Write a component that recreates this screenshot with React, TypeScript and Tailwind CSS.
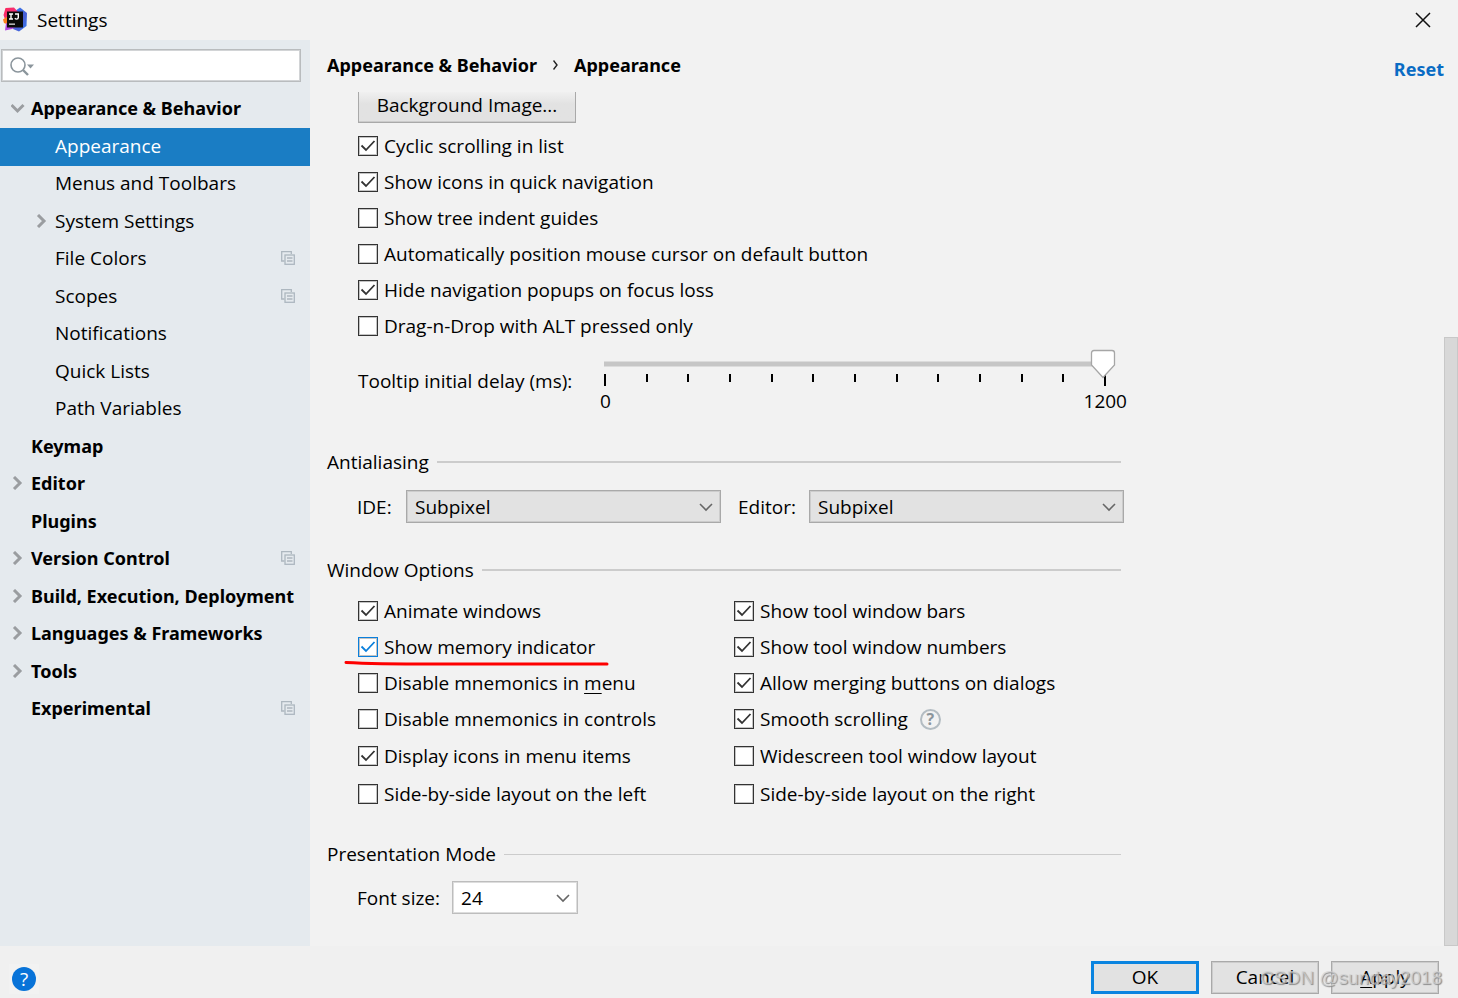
import { useState, type ReactNode } from "react";
import clsx from "clsx";

type TreeItem = {
  label: string;
  level: 0 | 1;
  arrow?: "open" | "closed";
  project?: boolean;
};

const tree: TreeItem[] = [
  { label: "Appearance & Behavior", level: 0, arrow: "open" },
  { label: "Appearance", level: 1 },
  { label: "Menus and Toolbars", level: 1 },
  { label: "System Settings", level: 1, arrow: "closed" },
  { label: "File Colors", level: 1, project: true },
  { label: "Scopes", level: 1, project: true },
  { label: "Notifications", level: 1 },
  { label: "Quick Lists", level: 1 },
  { label: "Path Variables", level: 1 },
  { label: "Keymap", level: 0 },
  { label: "Editor", level: 0, arrow: "closed" },
  { label: "Plugins", level: 0 },
  { label: "Version Control", level: 0, arrow: "closed", project: true },
  { label: "Build, Execution, Deployment", level: 0, arrow: "closed" },
  { label: "Languages & Frameworks", level: 0, arrow: "closed" },
  { label: "Tools", level: 0, arrow: "closed" },
  { label: "Experimental", level: 0, project: true },
];

// Bold text is set in Noto Sans, the rest of the dialog in Open Sans
const boldText = "font-['Noto_Sans',sans-serif] text-[18px] font-bold";

function Logo() {
  return (
    <svg width="26" height="26" viewBox="0 0 26 26" aria-hidden="true">
      <defs>
        <linearGradient id="logo-blue" x1="0" y1="0" x2="1" y2="1">
          <stop offset="0" stopColor="#2f7df0" />
          <stop offset="0.6" stopColor="#4a5fd6" />
          <stop offset="1" stopColor="#2f7df0" />
        </linearGradient>
        <linearGradient id="logo-red" x1="0" y1="0" x2="1" y2="1">
          <stop offset="0" stopColor="#fe2857" />
          <stop offset="1" stopColor="#e8359b" />
        </linearGradient>
      </defs>
      <path d="M12 4 L17 .5 L24 6 L23.500 19 L16 24.500 L10 22 Z" fill="url(#logo-blue)" />
      <path d="M2.500 1 L11 .5 L16 6 L14 14 L3 15 L.5 8 Z" fill="url(#logo-red)" />
      <path d="M0 12.500 L5 9 L6 18 L1 16 Z" fill="#fc801d" />
      <path d="M3 16 L13 20 L9 22 L2 23.500 Z" fill="#b34ae0" />
      <rect x="4" y="4.500" width="16" height="16" fill="#0b0b0b" />
      <path d="M6 7 h4 M8 7 v5 M6 12 h4 M12 7 h3.300 v3.600 q0 1.500 -1.600 1.500 q-1.200 0 -1.900 -.8" fill="none" stroke="#fff" strokeWidth="1.400" />
      <rect x="6" y="16.500" width="6" height="1.300" fill="#ddd" />
    </svg>
  );
}

function Arrow({ open }: { open: boolean }) {
  return (
    <svg width="14" height="14" viewBox="0 0 14 14" fill="none" stroke="#9a9da0" strokeWidth="3" aria-hidden="true">
      {open ? <path d="M.5 4 L6.500 10 L12.500 4" /> : <path d="M3 1 L9 7 L3 13" />}
    </svg>
  );
}

function ProjectIcon() {
  return (
    <svg width="14" height="14" viewBox="0 0 14 14" fill="none" stroke="#adb7bf" strokeWidth="1.300" aria-hidden="true">
      <path d="M3.500 10 H.7 V.7 H10.300 V3" />
      <rect x="4" y="4" width="9.300" height="9.300" />
      <path d="M6 7 H11.500 M6 10 H11.500" />
    </svg>
  );
}

function Check({ label, defaultChecked = false, focused = false }: { label: ReactNode; defaultChecked?: boolean; focused?: boolean }) {
  return (
    <label className="flex items-center gap-1.5">
      <span className={clsx("grid size-5", focused ? "text-[#0a7fdc]" : "text-[#333333]")}>
        <input
          type="checkbox"
          defaultChecked={defaultChecked}
          className="peer col-start-1 row-start-1 size-5 appearance-none border border-current bg-white shadow-[inset_0_0_0_1px_#c4c4c4]"
        />
        <svg viewBox="0 0 20 20" className="pointer-events-none invisible col-start-1 row-start-1 size-5 peer-checked:visible" fill="none" stroke="currentColor" strokeWidth="1.800" aria-hidden="true">
          <path d="M3.500 9.500 L8 14 L16.500 5" />
        </svg>
      </span>
      <span>{label}</span>
    </label>
  );
}

function Dropdown({ id, options, editable = false, className }: { id: string; options: string[]; editable?: boolean; className: string }) {
  return (
    <div className={clsx("grid items-center", className)}>
      <select
        id={id}
        className={clsx(
          "col-start-1 row-start-1 h-[33px] w-full appearance-none border pr-8 pl-2",
          editable
            ? "border-[#bdbdbd] bg-white shadow-[inset_0_0_0_1px_#dddddd]"
            : "border-[#a9a9a9] bg-[#e2e2e2] shadow-[inset_0_0_0_1px_#cccccc]",
        )}
      >
        {options.map((o) => (
          <option key={o}>{o}</option>
        ))}
      </select>
      <svg viewBox="0 0 14 14" className="pointer-events-none col-start-1 row-start-1 mr-2 size-3.5 justify-self-end" fill="none" stroke="#666666" strokeWidth="1.600" aria-hidden="true">
        <path d="M1 4 L7 10 L13 4" />
      </svg>
    </div>
  );
}

function SectionTitle({ children, thin = false }: { children: ReactNode; thin?: boolean }) {
  return (
    <div className="flex h-6 items-center gap-2">
      <h2>{children}</h2>
      <div className={clsx("flex-1 bg-[#cccccc]", thin ? "h-px" : "h-0.5")} />
    </div>
  );
}

function DelaySlider() {
  const [delay, setDelay] = useState(1200);
  return (
    <div className="w-[502px]">
      <div className="grid h-[25px] items-center">
        <div className="col-start-1 row-start-1 h-1.5 border-y border-[#dcdcdc] bg-[#c6c6c6]" />
        <input
          id="tooltip-delay"
          type="range"
          min={0}
          max={1200}
          value={delay}
          onChange={(e) => setDelay(Number(e.target.value))}
          className="col-start-1 row-start-1 h-6 w-full opacity-0"
        />
        <div className="pointer-events-none relative col-start-1 row-start-1 h-[30px] w-[499px] self-start">
          <svg
            width="26"
            height="30"
            viewBox="0 0 26 30"
            className="absolute top-0 -translate-x-1/2"
            style={{ left: `${(delay / 1200) * 100}%` }}
            fill="#ffffff"
            stroke="#a6a6a6"
            strokeWidth="1.300"
            aria-hidden="true"
          >
            <path d="M4 1.500 H22 Q24.500 1.500 24.500 4 V16 L13 28.500 L1.500 16 V4 Q1.500 1.500 4 1.500 Z" />
          </svg>
        </div>
      </div>
      <div className="flex justify-between">
        {Array.from({ length: 13 }, (_, i) => (
          <span key={i} className={clsx("w-0.5 bg-black", i % 12 === 0 ? "h-3" : "h-2")} />
        ))}
      </div>
      <div className="-mr-[21px] -ml-1 mt-[3px] flex justify-between leading-6">
        <span>0</span>
        <span>1200</span>
      </div>
    </div>
  );
}

export default function App() {
  const [selected, setSelected] = useState("Appearance");

  return (
    <div className="relative flex min-h-screen flex-col bg-[#f2f2f2] font-['Open_Sans','Noto_Sans',sans-serif] text-[19px] leading-6 text-black">
      {/* Title bar */}
      <header className="flex h-10 items-center gap-2 pr-[27px] pl-[3px]">
        <Logo />
        <h1 className="flex-1">Settings</h1>
        <button type="button" aria-label="Close" className="size-4">
          <svg viewBox="0 0 16 16" className="size-4" stroke="#111111" strokeWidth="1.500" aria-hidden="true">
            <path d="M1 1 L15 15 M15 1 L1 15" />
          </svg>
        </button>
      </header>

      <div className="flex flex-1">
        {/* Settings tree */}
        <aside className="w-[310px] shrink-0 bg-[#e5eaee] pt-[9px]">
          <label className="mr-[9px] ml-px flex h-[33px] items-center border border-[#b9bcbe] bg-white pl-2 shadow-[inset_0_0_0_1px_#d2d4d6]">
            <svg width="26" height="20" viewBox="0 0 26 20" fill="none" stroke="#8b959c" strokeWidth="1.600" aria-hidden="true">
              <circle cx="8" cy="9" r="7" />
              <path d="M13 14 L18 19" strokeWidth="2.400" />
              <path d="M17 8.500 H24 L20.500 12.500 Z" fill="#8b959c" stroke="none" />
            </svg>
            <input type="text" aria-label="Search settings" className="min-w-0 flex-1 outline-none" />
          </label>
          <nav className="mt-[9px]">
            {tree.map((item) => (
              <button
                key={item.label}
                type="button"
                onClick={() => setSelected(item.label)}
                className={clsx(
                  "flex w-full items-center gap-1.5 pr-[15px] text-left whitespace-nowrap odd:h-[37px] odd:pb-[3px] even:h-[38px] even:pb-0.5",
                  item.level === 0 ? "pl-[11px]" : "pl-[35px]",
                  item.level === 0 && boldText,
                  item.label === selected && "bg-[#1a7dc4] text-white",
                )}
              >
                <span className="w-3.5 shrink-0">{item.arrow && <Arrow open={item.arrow === "open"} />}</span>
                <span className="flex-1">{item.label}</span>
                {item.project && <ProjectIcon />}
              </button>
            ))}
          </nav>
        </aside>

        {/* Page */}
        <main className="min-w-0 flex-1 pl-[17px]">
          <div className="flex items-start justify-between pt-[13px]">
            <div className={clsx("flex items-center gap-4", boldText)}>
              <span>Appearance &amp; Behavior</span>
              <svg width="5" height="10" viewBox="0 0 5 10" fill="none" stroke="#222222" strokeWidth="1.400" aria-hidden="true">
                <path d="M.5 .5 L4 5 L.5 9.500" />
              </svg>
              <span>Appearance</span>
            </div>
            <a href="#reset" className={clsx("pt-1 text-[#0a6cc4]", boldText)}>
              Reset
            </a>
          </div>

          <div className="max-w-[794px]">
            <div className="pl-[31px]">
              <button type="button" className="mt-[11px] block h-[31px] w-[218px] border-x border-b border-[#a9a9a9] bg-linear-to-b from-[#f0f0f0] to-[#e2e2e2] to-40% pb-1 whitespace-nowrap shadow-[inset_0_-1px_0_#cccccc]">
                Background Image...
              </button>
              <div className="mt-[5px] grid auto-rows-[36px] items-center justify-items-start">
                <Check label="Cyclic scrolling in list" defaultChecked />
                <Check label="Show icons in quick navigation" defaultChecked />
                <Check label="Show tree indent guides" />
                <Check label="Automatically position mouse cursor on default button" />
                <Check label="Hide navigation popups on focus loss" defaultChecked />
                <Check label="Drag-n-Drop with ALT pressed only" />
              </div>
              <div className="mt-[5px] flex items-center justify-between pr-[15px]">
                <label htmlFor="tooltip-delay">Tooltip initial delay (ms):</label>
                <DelaySlider />
              </div>
            </div>

            <section className="mt-[37px]">
              <SectionTitle>Antialiasing</SectionTitle>
              <div className="mt-4 -mr-[3px] flex items-center pl-[30px]">
                <label htmlFor="ide-aa" className="w-[49px]">IDE:</label>
                <Dropdown id="ide-aa" options={["Subpixel", "Greyscale", "No antialiasing"]} className="flex-1" />
                <label htmlFor="editor-aa" className="ml-[17px] w-[71px]">Editor:</label>
                <Dropdown id="editor-aa" options={["Subpixel", "Greyscale", "No antialiasing"]} className="flex-1" />
              </div>
            </section>

            <section className="mt-[35px]">
              <SectionTitle>Window Options</SectionTitle>
              <div className="relative mt-[11px] grid grid-cols-[376px_1fr] grid-rows-[repeat(4,36px)_38px_38px] items-center justify-items-start pl-[31px]">
                <Check label="Animate windows" defaultChecked />
                <Check label="Show tool window bars" defaultChecked />
                <Check label="Show memory indicator" defaultChecked focused />
                <Check label="Show tool window numbers" defaultChecked />
                <Check label={<>Disable mnemonics in <u className="decoration-1 underline-offset-3">m</u>enu</>} />
                <Check label="Allow merging buttons on dialogs" defaultChecked />
                <Check label="Disable mnemonics in controls" />
                <div className="flex items-center gap-3">
                  <Check label="Smooth scrolling" defaultChecked />
                  <button type="button" aria-label="About smooth scrolling" className="flex size-[21px] items-center justify-center rounded-full border-2 border-[#b3bcc2] text-[16px] leading-4 font-bold text-[#8b959c]">
                    ?
                  </button>
                </div>
                <Check label="Display icons in menu items" defaultChecked />
                <Check label="Widescreen tool window layout" />
                <Check label="Side-by-side layout on the left" />
                <Check label="Side-by-side layout on the right" />
                {/* Pen stroke under the memory indicator option */}
                <svg width="266" height="8" viewBox="0 0 266 8" className="pointer-events-none absolute top-[66px] left-[17px]" fill="none" stroke="#fe0000" strokeWidth="3" strokeLinecap="round" aria-hidden="true">
                  <path d="M2 3.500 Q30 5 90 5 H263" />
                </svg>
              </div>
            </section>

            <section className="mt-[29px]">
              <SectionTitle thin>Presentation Mode</SectionTitle>
              <div className="mt-[15px] flex items-center gap-3 pl-[30px]">
                <label htmlFor="font-size">Font size:</label>
                <Dropdown id="font-size" options={["24", "28", "32"]} editable className="w-[126px]" />
              </div>
            </section>
          </div>
        </main>

        {/* Scrollbar */}
        <div className="flex w-3.5 shrink-0 flex-col pt-[297px]">
          <div className="flex-1 border border-[#c8c8c8] bg-[#d8d8d8]" />
        </div>
      </div>

      <footer className="flex h-[52px] items-end justify-end gap-3 bg-[#f0f0f0] pr-[19px] pb-1 pl-[9px]">
        <div className="mr-auto bg-[#f2f2f2] p-[3px]">
          <button type="button" aria-label="Help" className="flex size-6 items-center justify-center rounded-full bg-[#0873d8] text-white">
            ?
          </button>
        </div>
        <button type="button" className="h-[33px] w-[108px] border-3 border-[#0a84e0] bg-[#e2e2e2] pb-0.5">OK</button>
        <button type="button" className="h-[33px] w-[108px] border border-[#a9a9a9] bg-[#e2e2e2] pb-0.5 shadow-[inset_0_0_0_1px_#cccccc]">Cancel</button>
        <button type="button" className="h-[33px] w-[108px] border border-[#a9a9a9] bg-[#e2e2e2] pb-0.5 shadow-[inset_0_0_0_1px_#cccccc]">
          <u className="decoration-1 underline-offset-3">A</u>pply
        </button>
      </footer>

      <div className="pointer-events-none absolute right-4 bottom-2 font-['Liberation_Sans',sans-serif] text-[19px] text-[#d4d4d4]/70 [text-shadow:1px_1px_1px_#8c8c8c]">
        CSDN @sunday2018
      </div>
    </div>
  );
}
